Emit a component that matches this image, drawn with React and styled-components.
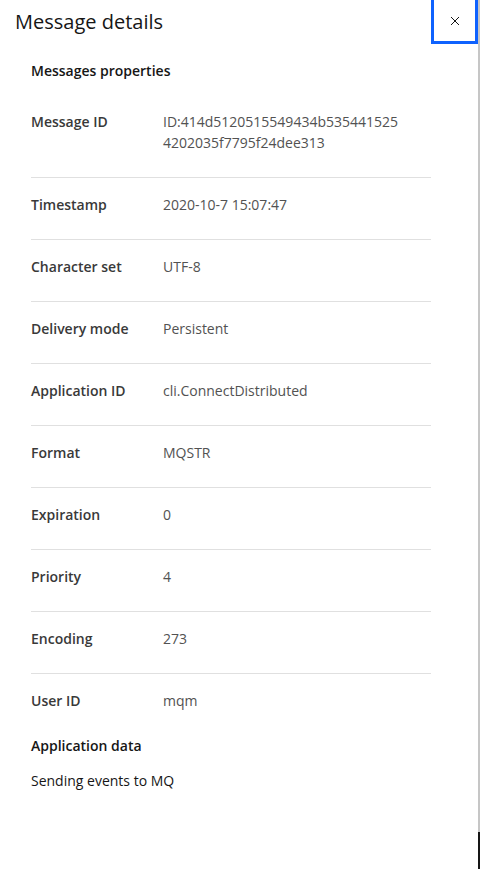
import React from "react";
import styled, { createGlobalStyle } from "styled-components";

const GlobalStyle = createGlobalStyle`
  * { box-sizing: border-box; }
  html, body { margin: 0; padding: 0; background: #ffffff; }
  body {
    font-family: "Open Sans", "Noto Sans", "Liberation Sans", sans-serif;
    -webkit-font-smoothing: antialiased;
  }
`;

const Page = styled.div`
  display: flex;
  width: 480px;
  height: 869px;
  overflow: hidden;
`;

const Panel = styled.div`
  flex: 0 0 478px;
  display: flex;
  flex-direction: column;
  background: #ffffff;
`;

const Edge = styled.div`
  flex: 0 0 2px;
  background: linear-gradient(
    to bottom,
    #c6c6c6 0,
    #c6c6c6 832px,
    #161616 832px,
    #161616 100%
  );
`;

const Header = styled.header`
  display: flex;
  justify-content: space-between;
  align-items: flex-start;
  height: 44px;
`;

const Title = styled.h2`
  margin: 0;
  padding: 8px 0 0 15px;
  font-size: 20px;
  line-height: 28px;
  font-weight: 400;
  color: #161616;
`;

const CloseButton = styled.button`
  width: 47px;
  height: 44px;
  padding: 0;
  display: flex;
  align-items: center;
  justify-content: center;
  background: #ffffff;
  border: 3px solid #0f62fe;
  border-top: none;
  cursor: pointer;
  color: #161616;
`;

const Body = styled.div`
  display: flex;
  flex-direction: column;
  padding: 0 0 0 31px;
  width: 431px;
`;

const SectionTitle = styled.h3`
  margin: ${(p) => p.$top}px 0 0;
  font-size: 14px;
  line-height: 21px;
  font-weight: 600;
  color: #161616;
`;

const List = styled.div`
  display: flex;
  flex-direction: column;
  margin-top: 14px;
`;

const Row = styled.div`
  display: grid;
  grid-template-columns: 132px 1fr;
  padding: 16px 0 24px;
  border-bottom: ${(p) => (p.$last ? "none" : "1px solid #e0e0e0")};
`;

const Label = styled.div`
  font-size: 14px;
  line-height: 21px;
  font-weight: 600;
  color: #393939;
`;

const Value = styled.div`
  font-size: 14px;
  line-height: 21px;
  font-weight: 400;
  color: #525252;
`;

const Line = styled.span`
  display: block;
`;

const Paragraph = styled.p`
  margin: 14px 0 0;
  font-size: 14px;
  line-height: 21px;
  color: #161616;
`;

const CloseIcon = () => (
  <svg width="10" height="10" viewBox="0 0 10 10" aria-hidden="true">
    <path d="M1 1 L9 9 M9 1 L1 9" stroke="#161616" strokeWidth="1" fill="none" />
  </svg>
);

const rows = [
  ["Message ID", ["ID:414d5120515549434b535441525", "4202035f7795f24dee313"]],
  ["Timestamp", ["2020-10-7 15:07:47"]],
  ["Character set", ["UTF-8"]],
  ["Delivery mode", ["Persistent"]],
  ["Application ID", ["cli.ConnectDistributed"]],
  ["Format", ["MQSTR"]],
  ["Expiration", ["0"]],
  ["Priority", ["4"]],
  ["Encoding", ["273"]],
  ["User ID", ["mqm"]],
];

export default function App() {
  return (
    <>
      <GlobalStyle />
      <Page>
        <Panel>
          <Header>
            <Title>Message details</Title>
            <CloseButton aria-label="Close">
              <CloseIcon />
            </CloseButton>
          </Header>
          <Body>
            <SectionTitle $top={16}>Messages properties</SectionTitle>
            <List>
              {rows.map(([label, lines], i) => (
                <Row key={label} $last={i === rows.length - 1}>
                  <Label>{label}</Label>
                  <Value>
                    {lines.map((l) => (
                      <Line key={l}>{l}</Line>
                    ))}
                  </Value>
                </Row>
              ))}
            </List>
            <SectionTitle $top={0}>Application data</SectionTitle>
            <Paragraph>Sending events to MQ</Paragraph>
          </Body>
        </Panel>
        <Edge />
      </Page>
    </>
  );
}
